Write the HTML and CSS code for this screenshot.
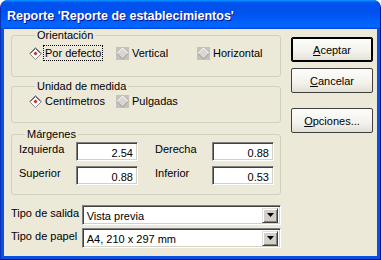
FILE: index.html
```html
<!DOCTYPE html>
<html lang="es">
<head>
    <meta charset="UTF-8">
    <title>Reporte</title>
    <link rel="stylesheet" href="styles.css">
</head>
<body>
    <div class="window">
        <div class="titlebar">
            <span class="title">Reporte 'Reporte de establecimientos'</span>
        </div>
        <div class="client">
            <div class="main">
                <fieldset class="group group-orient">
                    <legend>Orientación</legend>
                    <div class="radio-row">
                        <label class="radio">
                            <svg class="diamond" width="13" height="13" viewBox="0 0 13 13">
                                <polygon points="6.5,0.5 12.5,6.5 6.5,12.5 0.5,6.5" fill="#fff" stroke="#8a8a8a"/>
                                <polyline points="1.5,6.5 6.5,1.5 11.5,6.5" fill="none" stroke="#5a5a5a"/>
                                <polygon points="6.5,4.5 8.5,6.5 6.5,8.5 4.5,6.5" fill="#e0201c"/>
                            </svg>
                            <span class="focus">Por defecto</span>
                        </label>
                        <label class="radio">
                            <svg class="diamond" width="13" height="13" viewBox="0 0 13 13">
                                <rect x="0" y="0" width="13" height="13" fill="#c4c1ba"/>
                                <polygon points="6.5,1 12,6.5 6.5,12 1,6.5" fill="#d8d6d0"/>
                                <polyline points="1,6.5 6.5,1 12,6.5" fill="none" stroke="#fff"/>
                                <polyline points="1,6.5 6.5,12 12,6.5" fill="none" stroke="#9a9890"/>
                            </svg>
                            <span>Vertical</span>
                        </label>
                        <label class="radio">
                            <svg class="diamond" width="13" height="13" viewBox="0 0 13 13">
                                <rect x="0" y="0" width="13" height="13" fill="#c4c1ba"/>
                                <polygon points="6.5,1 12,6.5 6.5,12 1,6.5" fill="#d8d6d0"/>
                                <polyline points="1,6.5 6.5,1 12,6.5" fill="none" stroke="#fff"/>
                                <polyline points="1,6.5 6.5,12 12,6.5" fill="none" stroke="#9a9890"/>
                            </svg>
                            <span>Horizontal</span>
                        </label>
                    </div>
                </fieldset>

                <fieldset class="group group-unit">
                    <legend>Unidad de medida</legend>
                    <div class="radio-row">
                        <label class="radio">
                            <svg class="diamond" width="13" height="13" viewBox="0 0 13 13">
                                <polygon points="6.5,0.5 12.5,6.5 6.5,12.5 0.5,6.5" fill="#fff" stroke="#8a8a8a"/>
                                <polyline points="1.5,6.5 6.5,1.5 11.5,6.5" fill="none" stroke="#5a5a5a"/>
                                <polygon points="6.5,4.5 8.5,6.5 6.5,8.5 4.5,6.5" fill="#e0201c"/>
                            </svg>
                            <span>Centímetros</span>
                        </label>
                        <label class="radio">
                            <svg class="diamond" width="13" height="13" viewBox="0 0 13 13">
                                <rect x="0" y="0" width="13" height="13" fill="#c4c1ba"/>
                                <polygon points="6.5,1 12,6.5 6.5,12 1,6.5" fill="#d8d6d0"/>
                                <polyline points="1,6.5 6.5,1 12,6.5" fill="none" stroke="#fff"/>
                                <polyline points="1,6.5 6.5,12 12,6.5" fill="none" stroke="#9a9890"/>
                            </svg>
                            <span>Pulgadas</span>
                        </label>
                    </div>
                </fieldset>

                <fieldset class="group group-margins">
                    <legend>Márgenes</legend>
                    <div class="margin-grid">
                        <span class="field-label">Izquierda</span>
                        <div class="num-input">2.54</div>
                        <span class="field-label right-label">Derecha</span>
                        <div class="num-input">0.88</div>
                        <span class="field-label">Superior</span>
                        <div class="num-input">0.88</div>
                        <span class="field-label right-label">Inferior</span>
                        <div class="num-input">0.53</div>
                    </div>
                </fieldset>

                <div class="combo-rows">
                    <div class="combo-row">
                        <span class="combo-label">Tipo de salida</span>
                        <div class="combo">
                            <span class="combo-value">Vista previa</span>
                            <span class="drop-btn">
                                <svg width="7" height="4" viewBox="0 0 7 4"><polygon points="0,0 7,0 3.5,4" fill="#000"/></svg>
                            </span>
                        </div>
                    </div>
                    <div class="combo-row">
                        <span class="combo-label">Tipo de papel</span>
                        <div class="combo">
                            <span class="combo-value">A4, 210 x 297 mm</span>
                            <span class="drop-btn">
                                <svg width="7" height="4" viewBox="0 0 7 4"><polygon points="0,0 7,0 3.5,4" fill="#000"/></svg>
                            </span>
                        </div>
                    </div>
                </div>
            </div>

            <div class="buttons">
                <button class="btn btn-default"><u>A</u>ceptar</button>
                <button class="btn"><u>C</u>ancelar</button>
                <button class="btn btn-options"><u>O</u>pciones...</button>
            </div>
        </div>
    </div>
</body>
</html>
```

FILE: styles.css
```css
body {
    margin: 0;
    padding: 0;
    background-color: #ffffff;
    font-family: "Liberation Sans", Arial, sans-serif;
    font-size: 11px;
    color: #000;
}
.window {
    width: 381px;
    height: 260px;
    display: flex;
    flex-direction: column;
    background-color: #0a4fe0;
    border-radius: 8px 8px 0 0;
    box-sizing: border-box;
    border-left: 1px solid #0831b8;
    border-right: 1px solid #00138c;
    border-bottom: 1px solid #00138c;
}
.titlebar {
    height: 29px;
    flex-shrink: 0;
    display: flex;
    align-items: center;
    padding-left: 6px;
    border-radius: 7px 7px 0 0;
    background: linear-gradient(to bottom, #0997ff 0%, #0053ee 9%, #0050ee 40%, #0066ff 86%, #0064fc 92%, #005bff 95%, #003dd7 100%);
}
.title {
    color: #fff;
    font-weight: bold;
    font-size: 12.5px;
    text-shadow: 1px 1px 0 #0f1089;
    margin-top: 2px;
}
.client {
    flex: 1;
    display: flex;
    margin: 0 3px 3px;
    background-color: #ece9d8;
}
.main {
    width: 270px;
    margin-left: 7px;
    display: flex;
    flex-direction: column;
}
.group {
    margin: 0;
    padding: 0;
    border: 1px solid #d0d0bf;
    border-radius: 3px;
    min-width: 0;
}
.group legend {
    padding: 0 2px;
    margin-left: 6px;
    line-height: 13px;
}
.group-orient {
    padding: 3px 0 15px 17px;
}
.group-unit {
    margin-top: 3px;
    padding: 0 0 13px 17px;
}
.group-margins {
    margin-top: 5px;
    padding: 1px 6px 9px 7px;
}
.radio-row {
    display: grid;
    grid-template-columns: 87px 81px auto;
    height: 16px;
    align-items: center;
}
.radio {
    display: flex;
    align-items: center;
    gap: 3px;
}
.diamond {
    flex-shrink: 0;
}
.focus {
    outline: 1px dotted #000;
    outline-offset: 1px;
}
.margin-grid {
    display: grid;
    grid-template-columns: 57px 62px 74px 62px;
    grid-auto-rows: 19px;
    row-gap: 5px;
}
.field-label {
    padding-top: 1px;
}
.right-label {
    padding-left: 17px;
}
.num-input {
    box-sizing: border-box;
    height: 19px;
    background-color: #fff;
    border-top: 1px solid #808080;
    border-left: 1px solid #808080;
    border-right: 1px solid #fff;
    border-bottom: 1px solid #fff;
    box-shadow: inset 1px 1px 0 #404040, inset -1px -1px 0 #d4d0c8;
    text-align: right;
    padding: 4px 4px 0 0;
}
.combo-rows {
    margin-top: 10px;
    display: flex;
    flex-direction: column;
    gap: 3px;
}
.combo-row {
    display: flex;
    align-items: flex-start;
}
.combo-label {
    width: 71px;
    padding-top: 2px;
}
.combo {
    box-sizing: border-box;
    width: 200px;
    height: 20px;
    display: flex;
    align-items: center;
    background-color: #fff;
    border-top: 1px solid #808080;
    border-left: 1px solid #808080;
    border-right: 1px solid #fff;
    border-bottom: 1px solid #fff;
    box-shadow: inset 1px 1px 0 #404040, inset -1px -1px 0 #d4d0c8;
    padding: 2px 2px 2px 4px;
}
.combo-value {
    flex: 1;
    padding-top: 1px;
}
.drop-btn {
    box-sizing: border-box;
    width: 16px;
    height: 15px;
    display: flex;
    align-items: center;
    justify-content: center;
    background-color: #d4d0c8;
    border-top: 1px solid #dfdfdf;
    border-left: 1px solid #dfdfdf;
    border-right: 1px solid #404040;
    border-bottom: 1px solid #404040;
    box-shadow: inset 1px 1px 0 #fff, inset -1px -1px 0 #808080;
}
.buttons {
    width: 82px;
    margin-left: 10px;
    padding-top: 8px;
    display: flex;
    flex-direction: column;
}
.btn {
    box-sizing: border-box;
    width: 82px;
    height: 25px;
    margin: 0 0 6px;
    padding: 0;
    font-family: "Liberation Sans", Arial, sans-serif;
    font-size: 11px;
    color: #000;
    border: 1px solid #404040;
    border-radius: 2px;
    background: linear-gradient(to bottom, #fdfdfb 0%, #f3f2ec 60%, #e2dfd4 100%);
}
.btn-default {
    border-color: #000;
    box-shadow: inset 0 0 0 1px #000;
}
.btn-options {
    margin-top: 9px;
}
```
